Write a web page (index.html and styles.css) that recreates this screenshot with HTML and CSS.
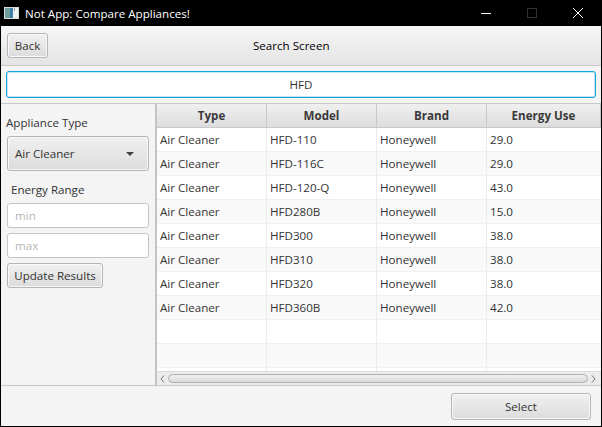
FILE: index.html
```html
<!DOCTYPE html>
<html lang="en-US">
<head>
    <meta charset="UTF-8">
    <title>Not App: Compare Appliances!</title>
    <link rel="stylesheet" href="styles.css">
</head>
<body>
<div class="app">
    <div class="titlebar">
        <svg class="appicon" width="15" height="12" viewBox="0 0 15 12">
            <rect x="0" y="0" width="15" height="12" fill="#d4dcdc"/>
            <rect x="1" y="1" width="5" height="10" fill="#6f9c9c"/>
            <rect x="6" y="1" width="3" height="10" fill="#3f7fa8"/>
            <rect x="9" y="1" width="5" height="10" fill="#eef2f2"/>
            <rect x="10" y="1" width="1" height="3" fill="#8aa"/>
        </svg>
        <span class="apptitle">Not App: Compare Appliances!</span>
        <div class="winbtns">
            <svg width="12" height="12" viewBox="0 0 12 12"><path d="M1 6.5h10" stroke="#fff" fill="none"/></svg>
            <svg width="12" height="12" viewBox="0 0 12 12"><rect x="1.5" y="1.5" width="9" height="9" stroke="#333" fill="none"/></svg>
            <svg width="12" height="12" viewBox="0 0 12 12"><path d="M1 1l10 10M11 1L1 11" stroke="#fff" fill="none"/></svg>
        </div>
    </div>

    <div class="toolbar">
        <button class="btn back">Back</button>
        <span class="screenname">Search Screen</span>
    </div>

    <div class="searchrow">
        <input class="search" type="text" value="HFD">
    </div>

    <div class="main">
        <div class="side">
            <label class="typelabel">Appliance Type</label>
            <div class="btn combo">
                <span>Air Cleaner</span>
                <span class="arrow"></span>
            </div>
            <label class="rangelabel">Energy Range</label>
            <input class="field" type="text" placeholder="min">
            <input class="field" type="text" placeholder="max">
            <button class="btn update">Update Results</button>
        </div>

        <div class="tablewrap">
            <div class="rows">
                <div class="row head"><div>Type</div><div>Model</div><div>Brand</div><div>Energy Use</div></div>
                <div class="row"><div>Air Cleaner</div><div>HFD-110</div><div>Honeywell</div><div>29.0</div></div>
                <div class="row"><div>Air Cleaner</div><div>HFD-116C</div><div>Honeywell</div><div>29.0</div></div>
                <div class="row"><div>Air Cleaner</div><div>HFD-120-Q</div><div>Honeywell</div><div>43.0</div></div>
                <div class="row"><div>Air Cleaner</div><div>HFD280B</div><div>Honeywell</div><div>15.0</div></div>
                <div class="row"><div>Air Cleaner</div><div>HFD300</div><div>Honeywell</div><div>38.0</div></div>
                <div class="row"><div>Air Cleaner</div><div>HFD310</div><div>Honeywell</div><div>38.0</div></div>
                <div class="row"><div>Air Cleaner</div><div>HFD320</div><div>Honeywell</div><div>38.0</div></div>
                <div class="row"><div>Air Cleaner</div><div>HFD360B</div><div>Honeywell</div><div>42.0</div></div>
                <div class="row"><div></div><div></div><div></div><div></div></div>
                <div class="row"><div></div><div></div><div></div><div></div></div>
                <div class="row"><div></div><div></div><div></div><div></div></div>
            </div>
            <div class="hscroll">
                <svg width="5" height="8" viewBox="0 0 5 8"><path d="M4 0.5L1 4l3 3.5" stroke="#777" fill="none"/></svg>
                <div class="thumb"></div>
                <svg width="5" height="8" viewBox="0 0 5 8"><path d="M1 0.5L4 4L1 7.5" stroke="#777" fill="none"/></svg>
            </div>
        </div>
    </div>

    <div class="bottombar">
        <button class="btn select">Select</button>
    </div>
</div>
</body>
</html>
```

FILE: styles.css
```css
html, body {
    margin: 0;
    padding: 0;
    height: 100%;
    overflow: hidden;
    background: #000;
}

body, button, input {
    font-family: "Open Sans", "Noto Sans", sans-serif;
    font-size: 11.6px;
    color: #333;
}

.app {
    width: 602px;
    height: 427px;
    box-sizing: border-box;
    border: 1px solid #000;
    border-top: none;
    background: #f4f4f4;
    display: flex;
    flex-direction: column;
}

.titlebar {
    height: 26px;
    flex: none;
    background: #000;
    color: #fff;
    display: flex;
    align-items: center;
    padding-left: 3px;
}

.apptitle {
    margin-left: 6px;
}

.winbtns {
    margin-left: auto;
    display: flex;
    gap: 34px;
    margin-right: 17px;
}

.btn {
    box-sizing: border-box;
    border: 1px solid #b5b5b5;
    border-radius: 3px;
    background: linear-gradient(#f0f0f0, #dcdcdc);
    box-shadow: inset 0 0 0 1px #f8f8f8;
    padding: 0;
    color: #333;
}

.toolbar {
    height: 40px;
    flex: none;
    box-sizing: border-box;
    border-bottom: 1px solid #c8c8c8;
    background: linear-gradient(#f6f6f6, #e4e4e4);
    display: flex;
    align-items: center;
    padding: 0 6px;
}

.back {
    width: 41px;
    height: 25px;
}

.screenname {
    margin-left: 205px;
    color: #000;
}

.searchrow {
    height: 38px;
    flex: none;
    box-sizing: border-box;
    border-bottom: 1px solid #c8c8c8;
    padding: 5px 5px 0;
}

.search {
    display: block;
    width: 100%;
    height: 27px;
    box-sizing: border-box;
    border: 1px solid #12a3dc;
    border-radius: 3px;
    outline: none;
    background: #fff;
    box-shadow: inset 0 0 0 1px #c4e6f5;
    text-align: center;
}

.main {
    flex: 1;
    display: flex;
    min-height: 0;
    border-bottom: 1px solid #c8c8c8;
}

.side {
    width: 156px;
    flex: none;
    box-sizing: border-box;
    border-right: 2px solid #c4c4c4;
    padding: 10px 6px 0 6px;
    display: flex;
    flex-direction: column;
    align-items: flex-start;
}

.typelabel {
    margin-left: -1px;
    line-height: 17px;
}

.combo {
    width: 142px;
    height: 35px;
    margin-top: 5px;
    display: flex;
    align-items: center;
    justify-content: space-between;
    padding: 0 14px 0 7px;
}

.arrow {
    width: 0;
    height: 0;
    border-left: 4px solid transparent;
    border-right: 4px solid transparent;
    border-top: 4px solid #444;
}

.rangelabel {
    margin: 10px 0 0 4px;
    line-height: 17px;
}

.field {
    width: 142px;
    height: 25px;
    box-sizing: border-box;
    border: 1px solid #c6c6c6;
    border-radius: 3px;
    outline: none;
    background: #fff;
    padding: 0 7px;
    margin-top: 5px;
}

.field::placeholder {
    color: #b4b4b4;
}

.update {
    width: 96px;
    height: 25px;
    margin-top: 5px;
}

.tablewrap {
    flex: 1;
    min-width: 0;
    display: flex;
    flex-direction: column;
    background: #fff;
}

.rows {
    flex: 1;
    min-height: 0;
    overflow: hidden;
}

.row {
    display: grid;
    grid-template-columns: 110px 110px 110px 1fr;
    height: 24px;
    box-sizing: border-box;
    border-bottom: 1px solid #f0f0f0;
    line-height: 23px;
    background: #fff;
}

.row:nth-child(odd) {
    background: #f9f9f9;
}

.row > div {
    border-right: 1px solid #ececec;
    padding-left: 3px;
    white-space: nowrap;
}

.row > div:last-child {
    border-right: none;
}

.row.head {
    background: linear-gradient(#f0f0f0, #dddddd);
    border-bottom: 1px solid #c8c8c8;
    font-weight: 700;
    color: #3a3a3a;
}

.row.head > div {
    border-right: 1px solid #c8c8c8;
    padding-left: 0;
    text-align: center;
}

.hscroll {
    height: 13px;
    flex: none;
    background: #ececec;
    border-top: 1px solid #dcdcdc;
    display: flex;
    align-items: center;
    gap: 3px;
    padding: 0 5px 0 3px;
}

.thumb {
    flex: 1;
    height: 9px;
    box-sizing: border-box;
    border: 1px solid #b0b0b0;
    border-radius: 5px;
    background: linear-gradient(#f0f0f0, #dadada);
}

.bottombar {
    height: 40px;
    flex: none;
    display: flex;
    justify-content: flex-end;
    align-items: center;
    padding-right: 10px;
}

.select {
    width: 140px;
    height: 27px;
}
```
